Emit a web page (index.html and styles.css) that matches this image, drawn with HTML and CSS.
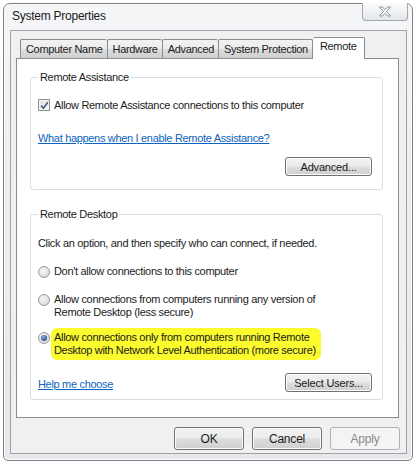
FILE: index.html
```html
<!DOCTYPE html>
<html>
<head>
<meta charset="utf-8">
<link rel="stylesheet" href="styles.css">
</head>
<body>
<div class="window">
  <div class="titlebar">
    <span class="title">System Properties</span>
    <button class="close" aria-label="Close">
      <svg width="14" height="11" viewBox="0 0 14 11">
        <path d="M1.5 1 L4.5 1 L7 3.6 L9.5 1 L12.5 1 L8.6 5.5 L12.5 10 L9.5 10 L7 7.4 L4.5 10 L1.5 10 L5.4 5.5 Z" fill="#fbfbfb" stroke="#8d9196" stroke-width="1" stroke-linejoin="round"/>
      </svg>
    </button>
  </div>
  <div class="client">
    <div class="tabs">
      <div class="tab">Computer Name</div>
      <div class="tab">Hardware</div>
      <div class="tab">Advanced</div>
      <div class="tab">System Protection</div>
      <div class="tab active">Remote</div>
    </div>
    <div class="panel">
      <fieldset class="group g1">
        <legend>Remote Assistance</legend>
        <div class="row check-row">
          <span class="checkbox">
            <svg width="9" height="9" viewBox="0 0 9 9"><path d="M1.2 4.6 L3.5 7.2 L7.8 1.2" fill="none" stroke="#4a5f8a" stroke-width="1.7"/></svg>
          </span>
          <span>Allow Remote Assistance connections to this computer</span>
        </div>
        <a class="link link1" href="#">What happens when I enable Remote Assistance?</a>
        <div class="btn-row">
          <button class="btn wide">Advanced...</button>
        </div>
      </fieldset>
      <fieldset class="group g2">
        <legend>Remote Desktop</legend>
        <div class="intro">Click an option, and then specify who can connect, if needed.</div>
        <div class="radio-row r1"><span class="radio"></span><span>Don't allow connections to this computer</span></div>
        <div class="radio-row r2"><span class="radio"></span><span>Allow connections from computers running any version of<br>Remote Desktop (less secure)</span></div>
        <div class="radio-row r3"><span class="radio on"></span><span class="hl">Allow connections only from computers running Remote<br>Desktop with Network Level Authentication (more secure)</span></div>
        <div class="bottom-row">
          <a class="link" href="#">Help me choose</a>
          <button class="btn wide">Select Users...</button>
        </div>
      </fieldset>
    </div>
    <div class="dlg-buttons">
      <button class="btn dlg">OK</button>
      <button class="btn dlg">Cancel</button>
      <button class="btn dlg disabled">Apply</button>
    </div>
  </div>
</div>
</body>
</html>
```

FILE: styles.css
```css
* { box-sizing: border-box; }
html, body { margin: 0; padding: 0; background: #ffffff; }
body {
  font-family: "Liberation Sans", Arial, sans-serif;
  font-size: 11px;
  letter-spacing: -0.32px;
  color: #1b1b1b;
  width: 416px;
  height: 463px;
  overflow: hidden;
}
.window {
  margin: 3px 0 0 3px;
  width: 410px;
  height: 458px;
  border: 1px solid #7d7f82;
  border-radius: 7px 7px 5px 5px;
  background: linear-gradient(180deg, #f4f6f8 0%, #eceef1 40%, #e6e8eb 100%);
  box-shadow: inset 0 0 0 1px #fbfcfd;
  display: flex;
  flex-direction: column;
}
.titlebar {
  height: 26px;
  display: flex;
  justify-content: space-between;
  align-items: flex-start;
  padding: 0 4px 0 8px;
}
.title {
  font-size: 12px;
  letter-spacing: -0.25px;
  margin-top: 5px;
  color: #1a1a1a;
}
.close {
  width: 46px;
  height: 18px;
  margin-top: -1px;
  border: 1px solid #a5a9ae;
  border-top: none;
  border-radius: 0 0 4px 4px;
  background: linear-gradient(180deg, #fbfbfc 0%, #eef0f2 55%, #e3e6e9 100%);
  display: flex;
  align-items: center;
  justify-content: center;
  padding: 0;
}
.client {
  margin: 0 5px 0 6px;
  height: 424px;
  border: 1px solid #9ea2a7;
  background: #f0f0f0;
  display: flex;
  flex-direction: column;
  padding: 6px 6px 0 5px;
}
.tabs {
  display: flex;
  align-items: flex-end;
  height: 21px;
  padding-left: 4px;
  position: relative;
  z-index: 1;
}
.tab {
  height: 19px;
  padding: 0 4px 0 5px;
  line-height: 18px;
  border: 1px solid #898c95;
  border-bottom: none;
  border-right: none;
  border-radius: 2px 2px 0 0;
  background: linear-gradient(180deg, #f2f2f2 0%, #ebebeb 50%, #dddddd 51%, #cfcfcf 100%);
  white-space: nowrap;
  color: #1b1b1b;
}
.tab:nth-child(4) { border-right: 1px solid #898c95; }
.tab.active {
  height: 22px;
  background: #ffffff;
  border: 1px solid #898c95;
  border-bottom: none;
  margin-bottom: -1px;
  padding: 0 8px 0 7px;
  line-height: 17px;
  border-left: none;
}
.panel {
  width: 383px;
  height: 360px;
  border: 1px solid #898c95;
  background: #ffffff;
  padding: 0 15px 0 13px;
}
.group {
  margin: 0;
  border: 1px solid #d5dfe5;
  border-radius: 3px;
  padding: 0 10px 0 7px;
  min-width: 0;
}
.group legend {
  padding: 0 2px;
  margin-left: 0;
  line-height: 14px;
  font-size: 11px;
}
.g1 { margin-top: 11px; padding-top: 14px; padding-bottom: 12px; height: 120px; }
.row {
  display: flex;
  align-items: center;
  height: 14px;
}
.checkbox {
  width: 12px;
  height: 12px;
  border: 1px solid #8f8f8f;
  background: linear-gradient(135deg, #dcdcdc, #f7f7f7);
  display: flex;
  align-items: center;
  justify-content: center;
  margin-right: 4px;
  box-shadow: inset 0 0 0 1px #f4f4f4;
}
.link {
  color: #0b64c0;
  text-decoration: underline;
  display: block;
  line-height: 14px;
}
.link1 { margin-top: 19px; width: max-content; }
.btn-row { display: flex; justify-content: flex-end; margin-top: 12px; }
.btn {
  font-family: inherit;
  font-size: 11px;
  letter-spacing: -0.2px;
  color: #1b1b1b;
  height: 19px;
  border: 1px solid #707070;
  border-radius: 3px;
  background: linear-gradient(180deg, #f2f2f2 0%, #ebebeb 48%, #dddddd 52%, #cfcfcf 100%);
  box-shadow: inset 0 0 0 1px #fcfcfc;
  padding: 0;
}
.btn.wide { width: 87px; }
.g2 { margin-top: 17px; padding-top: 15px; height: 193px; padding-bottom: 9px; }
.intro { line-height: 14px; }
.radio-row {
  display: flex;
  align-items: flex-start;
  line-height: 13px;
}
.radio {
  width: 12px;
  height: 12px;
  border-radius: 50%;
  border: 1px solid #9a9a9a;
  background: radial-gradient(circle at 40% 40%, #f6f6f6 0%, #dedede 70%, #cfcfcf 100%);
  margin: 1px 4px 0 0;
  flex: none;
  position: relative;
}
.radio.on::after {
  content: "";
  position: absolute;
  left: 2px;
  top: 2px;
  width: 6px;
  height: 6px;
  border-radius: 50%;
  background: radial-gradient(circle at 40% 35%, #8fb8e6 0%, #2f5f9a 60%, #1c3f70 100%);
}
.r1 { margin-top: 15px; }
.r2 { margin-top: 15px; }
.r3 { margin-top: 12px; }
.hl {
  background: #fbfb2e;
  border-radius: 6px;
  margin: -3px 0 0 -3px;
  padding: 3px 5px 3px 3px;
}
.bottom-row {
  display: flex;
  justify-content: space-between;
  align-items: center;
  margin-top: 13px;
}
.bottom-row .link { margin-top: 2px; }
.dlg-buttons {
  display: flex;
  justify-content: flex-end;
  gap: 8px;
  margin-top: 9px;
  width: 384px;
}
.btn.dlg { width: 70px; height: 23px; font-size: 12px; }
.btn.disabled {
  color: #8a8a8a;
  border-color: #adb2b5;
  background: #f4f4f4;
  box-shadow: none;
}
```
